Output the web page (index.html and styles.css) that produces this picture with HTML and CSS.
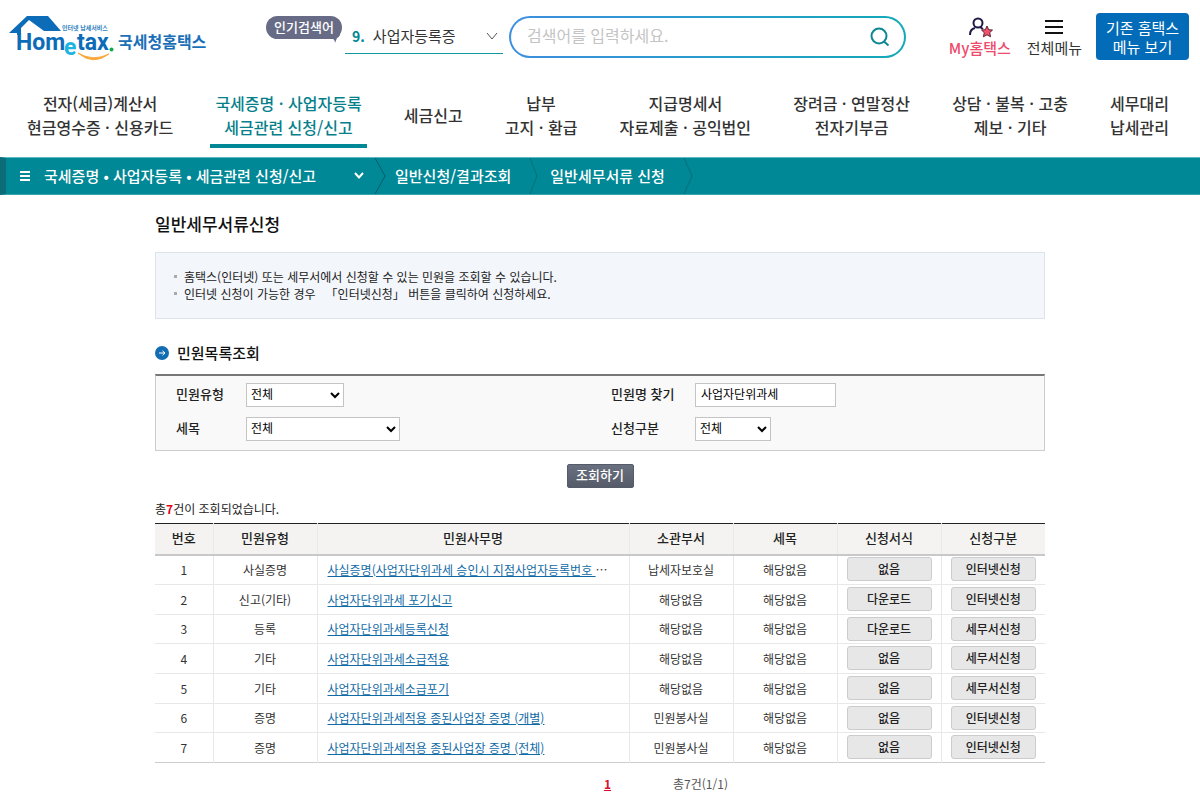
FILE: index.html
```html
<!DOCTYPE html>
<html lang="ko">
<head>
<meta charset="utf-8">
<title>국세청홈택스 - 일반세무서류신청</title>
<link rel="stylesheet" href="styles.css">
</head>
<body>
<header class="top">
  <a class="logo" href="#" aria-label="국세청홈택스">
    <svg width="200" height="54" viewBox="0 0 200 54">
      <path d="M0 25 L18 8 H39 L52 23 H35 L20 12 L12 20 V27 H8 V25 Z" fill="#0d6cb8"/>
      <text class="logo-main" x="7" y="42">Hom</text>
      <text class="logo-e" x="55" y="47">e</text>
      <text class="logo-main" x="68" y="42">tax</text>
      <circle cx="102.500" cy="41.500" r="2" fill="#12a84c"/>
      <path d="M69 45 Q84 58 100 46 Q84 54 69 45 Z" fill="#f9a83a" stroke="#f9a83a" stroke-width="1"/>
      <text class="logo-tag" x="53" y="22">인터넷 납세서비스</text>
      <text class="logo-name" x="109" y="40">국세청홈택스</text>
    </svg>
  </a>
  <span class="badge">인기검색어
    <svg class="badge-tail" width="10" height="11" viewBox="0 0 10 11"><path d="M0 5 L9 0 Q10 4 6 6 L4 11 Q4 7 0 6 Z" fill="#676b86"/></svg>
  </span>
  <button class="popular" type="button"><b>9.</b><span>사업자등록증</span>
    <svg width="12" height="8" viewBox="0 0 12 8"><path d="M1 1 L6 7 L11 1" fill="none" stroke="#555" stroke-width="1"/></svg>
  </button>
  <form class="search">
    <input type="text" aria-label="검색어" placeholder="검색어를 입력하세요.">
    <button type="button" aria-label="검색">
      <svg width="20" height="20" viewBox="0 0 20 20"><circle cx="9" cy="9" r="7.500" fill="none" stroke="#0e8793" stroke-width="2"/><path d="M14 14.500 L18.500 18.500" stroke="#0e8793" stroke-width="2"/></svg>
    </button>
  </form>
  <a class="quick quick-my" href="#">
    <svg width="26" height="22" viewBox="0 0 26 22"><circle cx="11" cy="6" r="4.500" fill="none" stroke="#1f1a44" stroke-width="2"/><path d="M3 18 Q3 12 8 11 M13 10 L16 12" fill="none" stroke="#1f1a44" stroke-width="2"/><path d="M20 9 L21.700 12.700 L25.500 13 L22.700 15.700 L23.600 19.800 L20 17.800 L16.400 19.800 L17.300 15.700 L14.500 13 L18.300 12.700 Z" fill="#f2506e" stroke="#5b2636" stroke-width="1"/></svg>
    My홈택스
  </a>
  <a class="quick quick-all" href="#">
    <svg width="20" height="22" viewBox="0 0 20 22"><path d="M1 4 H19 M1 10 H19 M1 16 H19" stroke="#111" stroke-width="2"/></svg>
    전체메뉴
  </a>
  <button class="old-menu" type="button">기존 홈택스<br>메뉴 보기</button>
</header>

<nav class="gnb">
  <a href="#">전자(세금)계산서<br>현금영수증 · 신용카드</a>
  <a class="on" href="#">국세증명 · 사업자등록<br>세금관련 신청/신고</a>
  <a href="#">세금신고</a>
  <a href="#">납부<br>고지 · 환급</a>
  <a href="#">지급명세서<br>자료제출 · 공익법인</a>
  <a href="#">장려금 · 연말정산<br>전자기부금</a>
  <a href="#">상담 · 불복 · 고충<br>제보 · 기타</a>
  <a href="#">세무대리<br>납세관리</a>
</nav>

<nav class="crumbs">
  <button class="crumb-main" type="button">
    <svg width="10" height="10" viewBox="0 0 10 10"><path d="M0 1 H10 M0 5 H10 M0 9 H10" stroke="#fff" stroke-width="2"/></svg>
    <span>국세증명 • 사업자등록 • 세금관련 신청/신고</span>
    <svg width="10" height="8" viewBox="0 0 10 8"><path d="M1 1 L5 5.500 L9 1" fill="none" stroke="#fff" stroke-width="2"/></svg>
  </button>
  <svg class="sep" width="12" height="36" viewBox="0 0 12 36"><path d="M1 0 L11 18 L1 36" fill="none" stroke="#045d69" stroke-width="1"/></svg>
  <a href="#">일반신청/결과조회</a>
  <svg class="sep" width="12" height="36" viewBox="0 0 12 36"><path d="M1 0 L8 18 L1 36" fill="none" stroke="#04707c" stroke-width="1"/></svg>
  <a href="#">일반세무서류 신청</a>
  <svg class="sep" width="12" height="36" viewBox="0 0 12 36"><path d="M1 0 L9 18 L1 36" fill="none" stroke="#04707c" stroke-width="1"/></svg>
</nav>

<main class="page">
  <h1>일반세무서류신청</h1>
  <ul class="notice">
    <li>홈택스(인터넷) 또는 세무서에서 신청할 수 있는 민원을 조회할 수 있습니다.</li>
    <li>인터넷 신청이 가능한 경우 &nbsp; 「인터넷신청」 버튼을 클릭하여 신청하세요.</li>
  </ul>
  <h2><svg width="14" height="14" viewBox="0 0 14 14"><circle cx="7" cy="7" r="7" fill="#136db3"/><path d="M4 7 H10 M7.500 4.800 L10 7 L7.500 9.200" fill="none" stroke="#fff" stroke-width="1"/></svg>민원목록조회</h2>

  <form>
    <div class="filters">
      <label for="type">민원유형</label>
      <select id="type" class="w-type"><option>전체</option></select>
      <label for="name">민원명 찾기</label>
      <input id="name" type="text" value="사업자단위과세">
      <label for="tax">세목</label>
      <select id="tax" class="w-tax"><option>전체</option></select>
      <label for="kind">신청구분</label>
      <select id="kind" class="w-kind"><option>전체</option></select>
    </div>
    <button class="submit" type="button">조회하기</button>
  </form>

  <p class="count">총<b>7</b>건이 조회되었습니다.</p>
  <table class="list">
    <colgroup><col class="c-no"><col class="c-std"><col class="c-name"><col class="c-std"><col class="c-std"><col class="c-std"><col class="c-std"></colgroup>
    <thead>
      <tr><th>번호</th><th>민원유형</th><th>민원사무명</th><th>소관부서</th><th>세목</th><th>신청서식</th><th>신청구분</th></tr>
    </thead>
    <tbody>
      <tr><td>1</td><td>사실증명</td><td class="name"><a href="#">사실증명(사업자단위과세 승인시 지점사업자등록번호 </a><span> ⋯</span></td><td>납세자보호실</td><td>해당없음</td><td><button type="button">없음</button></td><td><button type="button">인터넷신청</button></td></tr>
      <tr><td>2</td><td>신고(기타)</td><td class="name"><a href="#">사업자단위과세 포기신고</a></td><td>해당없음</td><td>해당없음</td><td><button type="button">다운로드</button></td><td><button type="button">인터넷신청</button></td></tr>
      <tr><td>3</td><td>등록</td><td class="name"><a href="#">사업자단위과세등록신청</a></td><td>해당없음</td><td>해당없음</td><td><button type="button">다운로드</button></td><td><button type="button">세무서신청</button></td></tr>
      <tr><td>4</td><td>기타</td><td class="name"><a href="#">사업자단위과세소급적용</a></td><td>해당없음</td><td>해당없음</td><td><button type="button">없음</button></td><td><button type="button">세무서신청</button></td></tr>
      <tr><td>5</td><td>기타</td><td class="name"><a href="#">사업자단위과세소급포기</a></td><td>해당없음</td><td>해당없음</td><td><button type="button">없음</button></td><td><button type="button">세무서신청</button></td></tr>
      <tr><td>6</td><td>증명</td><td class="name"><a href="#">사업자단위과세적용 종된사업장 증명 (개별)</a></td><td>민원봉사실</td><td>해당없음</td><td><button type="button">없음</button></td><td><button type="button">인터넷신청</button></td></tr>
      <tr><td>7</td><td>증명</td><td class="name"><a href="#">사업자단위과세적용 종된사업장 증명 (전체)</a></td><td>민원봉사실</td><td>해당없음</td><td><button type="button">없음</button></td><td><button type="button">인터넷신청</button></td></tr>
    </tbody>
  </table>
  <div class="pager"><a href="#">1</a><span>총7건(1/1)</span></div>
</main>
</body>
</html>
```

FILE: styles.css
```css
* { box-sizing: border-box; }
body {
  margin: 0;
  background: #fff;
  color: #222;
  font: 12px/17px "Noto Sans CJK KR", "Noto Sans", sans-serif;
}
button, input, select { font-family: inherit; margin: 0; }
button { cursor: pointer; }
a { color: inherit; text-decoration: none; }
svg { display: block; flex: none; }

.top { display: flex; align-items: flex-start; padding: 8px 11px 0 9px; height: 84px; white-space: nowrap; }
.logo { width: 257px; flex: none; }
.logo-main, .logo-e { font: bold 23px Roboto, sans-serif; fill: #0d6cb8; }
.logo-e { fill: #1cb5e0; }
.logo-tag { font: bold 6px "Noto Sans CJK KR", sans-serif; fill: #2d7fc0; }
.logo-name { font: bold 16px "Noto Sans CJK KR", sans-serif; fill: #1a70b8; }
.badge { position: relative; flex: none; margin: 8px 3px 0 0; width: 76px; height: 23px; border-radius: 12px; background: #676b86; color: #fff; font-size: 13px; font-weight: 500; line-height: 22px; text-align: center; }
.badge-tail { position: absolute; right: 1px; bottom: -4px; }
.popular { display: flex; align-items: center; flex: none; width: 158px; height: 34px; margin: 12px 6px 0 0; padding: 0 5px 2px 7px; border: 0; border-bottom: 1px solid #0e9aa1; background: none; color: #333; font-size: 15px; }
.popular b { color: #008896; font-size: 14px; margin-right: 8px; }
.popular svg { margin-left: auto; }
.search { display: flex; align-items: center; flex: 1; min-width: 0; height: 42px; margin: 8px 43px 0 0; padding: 0 14px 0 16px; border: 2px solid transparent; border-radius: 21px; background: linear-gradient(#fff, #fff) padding-box, linear-gradient(90deg, #3d8fe0, #12a9b8) border-box; }
.search input { flex: 1; min-width: 0; border: 0; padding: 0 0 4px; background: none; font-size: 16px; outline: 0; }
.search input::placeholder { color: #c4c4c4; }
.search button { border: 0; padding: 0; background: none; }
.quick { display: flex; flex-direction: column; align-items: center; flex: none; padding-top: 9px; line-height: 18px; }
.quick-my { margin-right: 16px; color: #ee4a6b; font-size: 15px; font-weight: 500; }
.quick-all { margin-right: 14px; color: #333; font-size: 15px; }
.old-menu { flex: none; width: 93px; height: 47px; margin-top: 5px; padding: 0; border: 0; border-radius: 4px; background: #036cb8; color: #fff; font-size: 15px; line-height: 19px; }

.gnb { display: flex; justify-content: space-between; padding: 0 26px 9px 22px; height: 73px; color: #333; font-size: 16px; font-weight: 500; line-height: 24px; text-align: center; white-space: nowrap; }
.gnb a { display: flex; align-items: center; padding: 1px 5px 0; border-bottom: 4px solid transparent; }
.gnb .on { color: #067f8b; border-color: #008896; }

.crumbs { display: flex; align-items: center; height: 38px; border-left: 6px solid #0a6d78; border-top: 1px solid #5db8c0; border-bottom: 1px solid #3aa4ae; background: #008896; color: #fff; font-size: 15px; font-weight: 500; white-space: nowrap; }
.crumb-main { display: flex; align-items: center; width: 368px; padding: 0 10px 0 14px; border: 0; background: none; color: #fff; font-size: 15px; font-weight: 500; }
.crumb-main span { margin: 0 auto 0 14px; }
.crumbs span, .crumbs a { padding-bottom: 2px; }
.sep { margin-right: 9px; }
.crumbs a { margin-right: 18px; }

.page { max-width: 890px; margin: 0 auto; padding-top: 17px; }
h1 { margin: 0 0 16px; font-size: 17px; line-height: 24px; font-weight: 500; color: #111; }
.notice { list-style: none; margin: 0; padding: 15px 18px 16px; border: 1px solid #dde3ea; background: #f3f6fb; line-height: 17px; }
.notice li { display: flex; align-items: center; gap: 7px; }
.notice li::before { content: ""; width: 3px; height: 3px; background: #aaa; }
h2 { display: flex; align-items: center; gap: 8px; margin: 23px 0 10px; font-size: 15px; line-height: 22px; font-weight: 500; color: #111; }

.filters { display: grid; grid-template-columns: 70px 365px 84px 1fr; gap: 10px 0; align-items: center; padding: 7px 20px 9px; border: 1px solid #ccc; border-top: 2px solid #777; background: #f9f9f9; }
.filters label { padding-bottom: 3px; font-size: 13px; font-weight: 500; color: #222; }
.filters select, .filters input { height: 24px; border: 1px solid #c4c4c4; border-radius: 0; background-color: #fff; color: #000; font-size: 12px; padding: 0 0 3px; }
.filters input { width: 141px; padding: 0 5px 4px; }
.w-type { width: 98px; }
.w-tax { width: 154px; }
.w-kind { width: 76px; }
.submit { display: block; width: 67px; height: 24px; margin: 13px auto 12px; padding: 0 0 2px; border: 1px solid #565b69; border-radius: 2px; background: linear-gradient(#69707f, #565b69); color: #fff; font-size: 13px; line-height: 18px; font-weight: 500; }

.count { margin: 0 0 6px; }
.count b { color: #e60012; }
.list { width: 100%; table-layout: fixed; border-collapse: collapse; border-top: 1px solid #222; border-bottom: 1px solid #ccc; color: #333; text-align: center; }
.c-no { width: 58px; }
.c-std { width: 104px; }
.list th { height: 31px; padding: 0 0 2px; background: #f4f3f1; border-bottom: 2px solid #c8c8c8; border-right: 1px solid #eaeaea; font-size: 13px; font-weight: 500; color: #222; }
.list td { padding: 0 0 1px; border-top: 1px solid #e8e8e8; border-right: 1px solid #e8e8e8; }
.list th:last-child, .list td:last-child { border-right: 0; }
.list tbody tr { height: 30px; }
.list tbody tr:nth-child(3n) { height: 29px; }
.list .name { padding-left: 10px; text-align: left; white-space: nowrap; }
.name a { color: #0f6aa5; text-decoration: underline; }
.list button { display: block; width: 85px; height: 24px; margin: 0 auto; padding: 0; border: 1px solid #ccc; border-radius: 3px; background: #e8e7e7; color: #222; font-size: 12px; line-height: 20px; font-weight: 500; }
.pager { display: grid; grid-template-columns: 1fr auto 1fr; padding: 12px 0 16px 15px; }
.pager a { grid-column: 2; color: #d8102c; font-weight: bold; text-decoration: underline; }
.pager span { margin-left: 62px; color: #555; }
```
